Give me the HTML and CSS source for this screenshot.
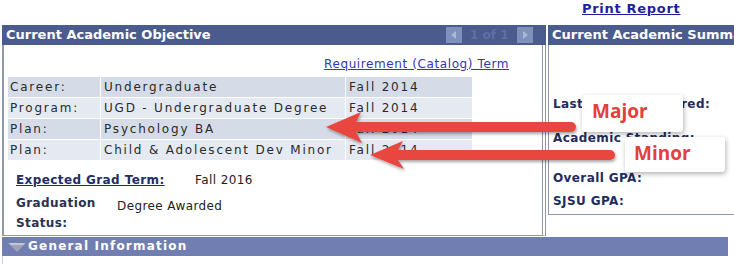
FILE: index.html
```html
<!DOCTYPE html>
<html lang="en">
<head>
    <meta charset="UTF-8">
    <title>Academic Objective</title>
    <link rel="stylesheet" href="styles.css">
</head>
<body>
<div class="page">
    <div class="print-row"><a href="#" class="print-link">Print Report</a></div>

    <div class="panels">
        <div class="panel objective">
            <div class="panel-head">
                <span class="panel-title">Current Academic Objective</span>
                <div class="pager">
                    <span class="pager-btn">
                        <svg width="16" height="16" viewBox="0 0 16 16"><polygon points="10,4 5,8 10,12" fill="#a9b8d5"/></svg>
                    </span>
                    <span class="pager-text">1 of 1</span>
                    <span class="pager-btn">
                        <svg width="16" height="16" viewBox="0 0 16 16"><polygon points="6,4 11,8 6,12" fill="#a9b8d5"/></svg>
                    </span>
                </div>
            </div>
            <div class="panel-body">
                <div class="term-link-row"><a href="#" class="term-link">Requirement (Catalog) Term</a></div>
                <table class="plan-table">
                    <tr class="row-dark">
                        <td class="c1">Career:</td>
                        <td class="c2">Undergraduate</td>
                        <td class="c3">Fall 2014</td>
                    </tr>
                    <tr class="row-light">
                        <td class="c1">Program:</td>
                        <td class="c2">UGD - Undergraduate Degree</td>
                        <td class="c3">Fall 2014</td>
                    </tr>
                    <tr class="row-dark">
                        <td class="c1">Plan:</td>
                        <td class="c2">Psychology BA</td>
                        <td class="c3">Fall 2014</td>
                    </tr>
                    <tr class="row-light">
                        <td class="c1">Plan:</td>
                        <td class="c2">Child &amp; Adolescent Dev Minor</td>
                        <td class="c3">Fall 2014</td>
                    </tr>
                </table>
                <div class="grad-row">
                    <span class="grad-label term"><a href="#" class="grad-link">Expected Grad Term:</a></span>
                    <span class="grad-value">Fall 2016</span>
                </div>
                <div class="grad-row status">
                    <span class="grad-label">Graduation<br>Status:</span>
                    <span class="grad-value">Degree Awarded</span>
                </div>
            </div>
        </div>

        <div class="panel summary">
            <div class="panel-head">
                <span class="panel-title">Current Academic Summary</span>
            </div>
            <div class="summary-body">
                <div class="sum-label last">Last Term Registered:</div>
                <div class="sum-label standing">Academic Standing:</div>
                <div class="sum-label overall">Overall GPA:</div>
                <div class="sum-label sjsu">SJSU GPA:</div>
            </div>
        </div>
    </div>

    <div class="section-bar">
        <svg class="section-icon" width="18" height="10" viewBox="0 0 18 10">
            <polygon points="0,0 18,0 9,9" fill="#9ea2b6"/>
            <polygon points="1,0 17,0 15,2 3,2" fill="#c4c7d4"/>
        </svg>
        <span>General Information</span>
    </div>
    <div class="bar-tail"></div>

    <!-- annotations drawn over the screen -->
    <div class="annot">
        <svg width="734" height="264" viewBox="0 0 734 264">
            <defs>
                <filter id="shadow" x="-5%" y="-50%" width="110%" height="200%">
                    <feDropShadow dx="1" dy="2" stdDeviation="1.5" flood-color="#000" flood-opacity="0.35"/>
                </filter>
            </defs>
            <path d="M326,127 L361,112 L356,122 L571,122 A5,5 0 0 1 571,132 L356,132 L362,143 Z" fill="#e8463f" filter="url(#shadow)"/>
            <path d="M370,155 L403,141 L398,150 L610,150 A5,5 0 0 1 610,160 L398,160 L404,169 Z" fill="#e8463f" filter="url(#shadow)"/>
        </svg>
        <div class="callout callout-major">Major</div>
        <div class="callout callout-minor">Minor</div>
    </div>
</div>
</body>
</html>
```

FILE: styles.css
```css
html, body {
    overflow: hidden;
}
body {
    margin: 0;
    background-color: #fff;
    font-family: "DejaVu Sans", Verdana, sans-serif;
    font-size: 12px;
    color: #222;
}
.page {
    position: relative;
    width: 734px;
    height: 264px;
    padding-left: 2px;
    box-sizing: border-box;
}
.print-row {
    height: 25px;
    padding-left: 580px;
}
.print-link {
    font-size: 13px;
    font-weight: bold;
    letter-spacing: 0.7px;
    line-height: 18px;
    color: #1f1f9e;
}
.panels {
    display: flex;
    align-items: flex-start;
    gap: 2px;
}
.panel {
    flex-shrink: 0;
}
.objective {
    width: 544px;
}
.summary {
    width: 240px;
}
.panel-head {
    display: flex;
    align-items: center;
    height: 20px;
    padding-left: 4px;
    background-color: #4a5b8e;
    color: #fff;
}
.panel-title {
    font-size: 13px;
    font-weight: bold;
    line-height: 20px;
    white-space: nowrap;
}
.pager {
    display: flex;
    align-items: center;
    gap: 8px;
    margin-left: auto;
    padding-right: 13px;
}
.pager-btn {
    display: flex;
    width: 16px;
    height: 16px;
    background-color: #7d91bb;
}
.pager-text {
    width: 39px;
    color: #5e71a2;
    font-weight: bold;
    white-space: nowrap;
}
.panel-body {
    height: 191px;
    box-sizing: border-box;
    padding-top: 11px;
    border-left: 2px solid #9098ad;
    border-right: 4px double #8d95a9;
    border-bottom: 1px solid #9098ad;
}
.term-link-row {
    width: 505px;
    text-align: right;
    line-height: 17px;
}
.term-link {
    color: #3535b5;
    letter-spacing: 0.6px;
}
.plan-table {
    width: 466px;
    margin: 3px 0 0 3px;
    border-collapse: separate;
    border-spacing: 1px;
    table-layout: fixed;
}
.plan-table td {
    box-sizing: border-box;
    height: 20px;
    padding: 0 0 0 3px;
    font-size: 12px;
    line-height: 20px;
    letter-spacing: 1.8px;
    color: #2a2a2a;
    white-space: nowrap;
    overflow: hidden;
}
.plan-table td.c1 {
    width: 92px;
    padding-left: 2px;
}
.plan-table td.c2 {
    width: 244px;
}
.plan-table td.c3 {
    width: 126px;
}
.row-dark td {
    background-color: #d5dce7;
}
.row-light td {
    background-color: #e5e9f1;
}
.grad-row {
    display: flex;
    margin-top: 12px;
    padding-left: 12px;
    line-height: 15px;
}
.grad-row.status {
    margin-top: 5px;
}
.grad-label {
    font-weight: bold;
    letter-spacing: 0.4px;
    color: #2b3150;
}
.grad-label.term {
    width: 179px;
}
.grad-link {
    color: #1f2e63;
}
.status .grad-label {
    width: 101px;
    line-height: 20px;
}
.grad-value {
    letter-spacing: 0.4px;
    color: #222;
}
.status .grad-value {
    padding-top: 6px;
}
.summary-body {
    height: 170px;
    box-sizing: border-box;
    padding-left: 4px;
    border-left: 1px solid #9098ad;
    border-bottom: 1px solid #9098ad;
}
.sum-label {
    font-weight: bold;
    letter-spacing: 0.4px;
    line-height: 15px;
    color: #1e2c5e;
    white-space: nowrap;
}
.sum-label.last {
    padding-top: 52px;
}
.sum-label.standing {
    margin-top: 19px;
}
.sum-label.overall {
    margin-top: 25px;
}
.sum-label.sjsu {
    margin-top: 8px;
}
.section-bar {
    display: flex;
    align-items: center;
    gap: 2px;
    width: 726px;
    height: 19px;
    margin-top: 1px;
    padding-left: 6px;
    box-sizing: border-box;
    background-color: #717eb1;
    color: #fff;
    font-weight: bold;
    letter-spacing: 1.2px;
    line-height: 19px;
}
.section-icon {
    margin-top: 2px;
}
.bar-tail {
    width: 0;
    height: 8px;
    border-left: 1px solid #d0d3dc;
}
.annot {
    position: absolute;
    left: 0;
    top: 0;
    width: 734px;
    height: 264px;
    pointer-events: none;
}
.annot svg {
    display: block;
}
.callout {
    position: absolute;
    box-sizing: border-box;
    padding: 3px 0 0 10px;
    background-color: #fff;
    border-radius: 3px;
    box-shadow: 1px 2px 5px rgba(0,0,0,0.3);
    font-family: "Open Sans", sans-serif;
    font-weight: 700;
    font-size: 19px;
    line-height: 26px;
    color: #e2403b;
}
.callout-major {
    left: 582px;
    top: 95px;
    width: 101px;
    height: 37px;
}
.callout-minor {
    left: 625px;
    top: 137px;
    width: 100px;
    height: 35px;
    padding-left: 9px;
}
```
